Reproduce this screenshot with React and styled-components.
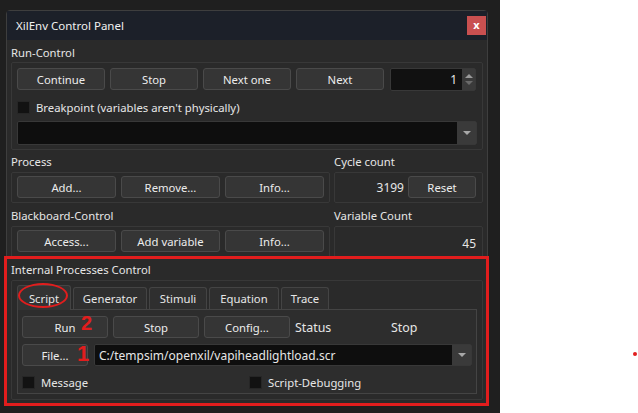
import React from 'react';
import styled, { createGlobalStyle } from 'styled-components';

const GlobalStyle = createGlobalStyle`
  html, body {
    margin: 0;
    padding: 0;
    background: #ffffff;
  }
  body {
    font-family: "Noto Sans", "Open Sans", sans-serif;
    font-size: 11.3px;
    color: #e6e6e6;
  }
`;

const Page = styled.div`
  position: relative;
  width: 638px;
  height: 413px;
  background: #ffffff;
`;

const Desktop = styled.div`
  position: relative;
  width: 500px;
  height: 413px;
  background: #1f1f1f;
  padding: 10px 0 0 6px;
  box-sizing: border-box;
`;

const Window = styled.div`
  width: 482px;
  height: 396px;
  box-sizing: border-box;
  background: #2a2a2a;
  border: 1px solid #3e3e3e;
  border-radius: 4px 4px 0 0;
  display: flex;
  flex-direction: column;
`;

const TitleBar = styled.div`
  height: 29px;
  background: #1c2029;
  display: flex;
  align-items: center;
  justify-content: space-between;
  padding: 0 1px 0 9px;
  font-size: 11.5px;
  color: #f0f0f0;
`;

const CloseButton = styled.div`
  width: 19px;
  height: 19px;
  background: #c95050;
  color: #ffffff;
  font-size: 11px;
  font-weight: bold;
  display: flex;
  align-items: center;
  justify-content: center;
  line-height: 1;
  padding-bottom: 2px;
  box-sizing: border-box;
`;

const Body = styled.div`
  padding: 0 4px;
  display: flex;
  flex-direction: column;
`;

const Label = styled.div`
  padding: ${p => p.$top || 5}px 0 0 0;
  height: ${p => p.$h || 22}px;
  box-sizing: border-box;
  line-height: 16px;
  white-space: nowrap;
`;

const Group = styled.div`
  border: 1px solid #383838;
  border-radius: 2px;
  padding: ${p => p.$pad || '5px'};
  box-sizing: border-box;
  height: ${p => p.$h}px;
`;

const ButtonGrid = styled.div`
  display: grid;
  grid-template-columns: ${p => p.$cols};
  gap: 5px;
`;

const Button = styled.div`
  height: 22px;
  box-sizing: border-box;
  background: #353535;
  border: 1px solid #4a4a4a;
  border-radius: 3px;
  display: flex;
  align-items: center;
  justify-content: center;
  white-space: nowrap;
  color: #ececec;
  width: ${p => (p.$w ? `${p.$w}px` : 'auto')};
`;

const SpinBox = styled.div`
  height: 23px;
  box-sizing: border-box;
  background: #111111;
  border: 1px solid #383838;
  border-radius: 2px;
  display: flex;
  margin-left: 1px;
`;

const SpinValue = styled.div`
  flex: 1;
  text-align: right;
  padding-right: 5px;
  line-height: 21px;
  font-size: 12px;
`;

const SpinArrows = styled.div`
  width: 13px;
  background: #3a3a3a;
  display: flex;
  flex-direction: column;
  align-items: center;
  justify-content: center;
  gap: 3px;
`;

const Arrow = styled.div`
  width: 0;
  height: 0;
  border-left: 4px solid transparent;
  border-right: 4px solid transparent;
  ${p => (p.$up ? 'border-bottom: 4px solid #9a9a9a;' : 'border-top: 4px solid #6a6a6a;')}
`;

const DropArrow = styled.div`
  width: 0;
  height: 0;
  border-left: 4px solid transparent;
  border-right: 4px solid transparent;
  border-top: 4px solid #a8a8a8;
`;

const CheckRow = styled.div`
  display: flex;
  align-items: center;
  gap: 6px;
  height: 20px;
  width: ${p => (p.$w ? `${p.$w}px` : 'auto')};
  margin: ${p => p.$margin || '0'};
`;

const CheckBox = styled.div`
  width: 13px;
  height: 13px;
  background: #121212;
  border: 1px solid #262626;
  box-sizing: border-box;
`;

const Combo = styled.div`
  height: ${p => p.$h || 24}px;
  box-sizing: border-box;
  background: #0e0e0e;
  border: 1px solid #383838;
  border-radius: 2px;
  display: flex;
  flex: 1;
`;

const ComboText = styled.div`
  flex: 1;
  padding-left: 4px;
  display: flex;
  align-items: center;
  white-space: nowrap;
  overflow: hidden;
  font-size: 12px;
`;

const ComboButton = styled.div`
  width: 19px;
  background: #3a3a3a;
  display: flex;
  align-items: center;
  justify-content: center;
`;

const Columns = styled.div`
  display: grid;
  grid-template-columns: 319px 149px;
  column-gap: 4px;
`;

const CountRow = styled.div`
  display: flex;
  align-items: center;
  justify-content: flex-end;
  gap: 4px;
  height: 22px;
`;

const CountValue = styled.div`
  text-align: right;
  font-size: 12px;
  padding-top: ${p => p.$pt || 0}px;
`;

const TabBar = styled.div`
  display: flex;
  gap: 2px;
  height: 22px;
  align-items: flex-end;
`;

const Tab = styled.div`
  height: ${p => (p.$active ? 25 : 22)}px;
  box-sizing: border-box;
  width: ${p => p.$w}px;
  background: ${p => (p.$active ? '#333333' : '#2f2f2f')};
  border: 1px solid #444444;
  border-bottom: none;
  border-radius: 3px 3px 0 0;
  display: flex;
  align-items: center;
  justify-content: center;
  margin-bottom: ${p => (p.$active ? -1 : 0)}px;
  position: relative;
  z-index: ${p => (p.$active ? 1 : 0)};
`;

const TabPane = styled.div`
  border: 1px solid #444444;
  background: #2d2d2d;
  padding: 6px 4px 0 4px;
  height: 85px;
  box-sizing: border-box;
  display: flex;
  flex-direction: column;
  gap: 6px;
`;

const PaneRow = styled.div`
  display: flex;
  align-items: center;
  gap: ${p => p.$gap ?? 5}px;
`;

const StatusText = styled.div`
  width: ${p => p.$w}px;
  white-space: nowrap;
  font-size: 12.4px;
`;

const Annotation = styled.div`
  position: absolute;
  pointer-events: none;
  color: #e11d1d;
  z-index: 10;
`;

const RedFrame = styled(Annotation)`
  left: 4px;
  top: 256px;
  width: 485px;
  height: 150px;
  border: 3px solid #e11d1d;
  box-sizing: border-box;
`;

const RedEllipse = styled(Annotation)`
  left: 18px;
  top: 283px;
  width: 50px;
  height: 25px;
  border: 2.5px solid #e11d1d;
  border-radius: 50%;
  box-sizing: border-box;
`;

const RedNumber = styled(Annotation)`
  left: ${p => p.$x}px;
  top: ${p => p.$y}px;
  font-family: "Liberation Sans", Arial, sans-serif;
  font-weight: bold;
  font-size: ${p => p.$size}px;
  line-height: 1;
`;

const RedDot = styled(Annotation)`
  left: 633px;
  top: 352px;
  width: 4px;
  height: 4px;
  border-radius: 50%;
  background: #e11d1d;
`;

const App = () => (
  <Page>
    <GlobalStyle />
    <Desktop>
      <Window>
        <TitleBar>
          <span>XilEnv Control Panel</span>
          <CloseButton>x</CloseButton>
        </TitleBar>
        <Body>
          <Label $top={5}>Run-Control</Label>
          <Group $h={88} $pad="5px 5px 4px 5px">
            <ButtonGrid $cols="repeat(4, 88px) 87px">
              <Button>Continue</Button>
              <Button>Stop</Button>
              <Button>Next one</Button>
              <Button>Next</Button>
              <SpinBox>
                <SpinValue>1</SpinValue>
                <SpinArrows>
                  <Arrow $up />
                  <Arrow />
                </SpinArrows>
              </SpinBox>
            </ButtonGrid>
            <CheckRow $margin="6px 0 4px 0">
              <CheckBox />
              <span>Breakpoint (variables aren't physically)</span>
            </CheckRow>
            <PaneRow>
              <Combo $h={24}>
                <ComboText />
                <ComboButton>
                  <DropArrow />
                </ComboButton>
              </Combo>
            </PaneRow>
          </Group>

          <Columns>
            <Label $top={4}>Process</Label>
            <Label $top={4}>Cycle count</Label>
            <Group $h={31} $pad="3px 5px">
              <ButtonGrid $cols="repeat(3, 99px)">
                <Button>Add...</Button>
                <Button>Remove...</Button>
                <Button>Info...</Button>
              </ButtonGrid>
            </Group>
            <Group $h={31} $pad="3px 6px 3px 5px">
              <CountRow>
                <CountValue>3199</CountValue>
                <Button $w={68}>Reset</Button>
              </CountRow>
            </Group>

            <Label $top={5} $h={23}>Blackboard-Control</Label>
            <Label $top={5} $h={23}>Variable Count</Label>
            <Group $h={32} $pad="3px 5px">
              <ButtonGrid $cols="repeat(3, 99px)">
                <Button>Access...</Button>
                <Button>Add variable</Button>
                <Button>Info...</Button>
              </ButtonGrid>
            </Group>
            <Group $h={32} $pad="0 6px 0 5px">
              <CountValue $pt={8}>45</CountValue>
            </Group>
          </Columns>

          <Label $top={4}>Internal Processes Control</Label>
          <Group $h={120} $pad="6px 5px 5px 5px">
            <TabBar>
              <Tab $active $w={54}>Script</Tab>
              <Tab $w={74}>Generator</Tab>
              <Tab $w={58}>Stimuli</Tab>
              <Tab $w={70}>Equation</Tab>
              <Tab $w={48}>Trace</Tab>
            </TabBar>
            <TabPane>
              <PaneRow>
                <Button $w={86}>Run</Button>
                <Button $w={86}>Stop</Button>
                <Button $w={86}>Config...</Button>
                <StatusText $w={91}>Status</StatusText>
                <StatusText $w={60}>Stop</StatusText>
              </PaneRow>
              <PaneRow $gap={6}>
                <Button $w={66}>File...</Button>
                <Combo $h={22}>
                  <ComboText>C:/tempsim/openxil/vapiheadlightload.scr</ComboText>
                  <ComboButton>
                    <DropArrow />
                  </ComboButton>
                </Combo>
              </PaneRow>
              <PaneRow $gap={0}>
                <CheckRow $w={227}>
                  <CheckBox />
                  <span>Message</span>
                </CheckRow>
                <CheckRow>
                  <CheckBox />
                  <span>Script-Debugging</span>
                </CheckRow>
              </PaneRow>
            </TabPane>
          </Group>
        </Body>
      </Window>
    </Desktop>
    <RedFrame />
    <RedEllipse />
    <RedNumber $x={81} $y={313} $size={20}>2</RedNumber>
    <RedNumber $x={77} $y={343} $size={22}>1</RedNumber>
    <RedDot />
  </Page>
);

export default App;
